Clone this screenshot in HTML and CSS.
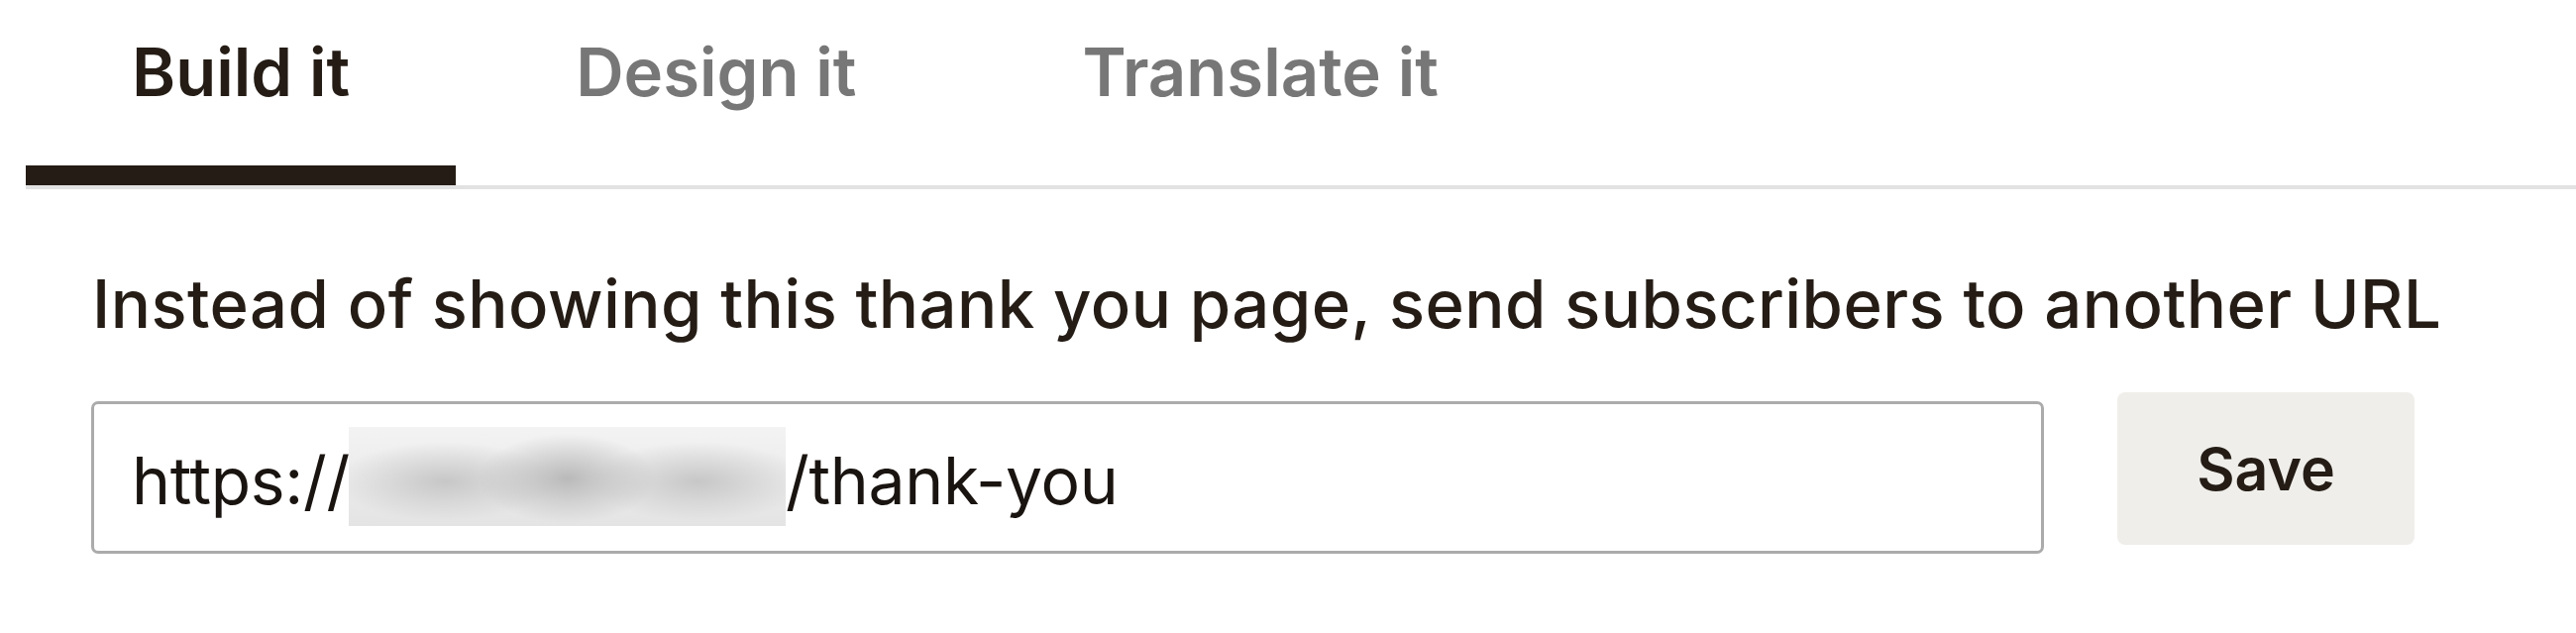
FILE: index.html
```html
<!DOCTYPE html>
<html lang="en">
<head>
<meta charset="utf-8">
<title>Thank you page settings</title>
<link rel="stylesheet" href="styles.css">
</head>
<body>
<div class="page">
  <nav class="tabs">
    <div class="tab active">Build it</div>
    <div class="tab">Design it</div>
    <div class="tab">Translate it</div>
  </nav>
  <section class="panel">
    <h2 class="heading">Instead of showing this thank you page, send subscribers to another URL</h2>
    <div class="row">
      <div class="field">
        <span class="url">https://</span><span class="redacted"></span><span class="url">/thank-you</span>
      </div>
      <button class="save" type="button">Save</button>
    </div>
  </section>
</div>
</body>
</html>
```
FILE: styles.css
```css
html, body {
  margin: 0;
  padding: 0;
  background: #ffffff;
}
body {
  font-family: Inter, "Liberation Sans", sans-serif;
  color: #241c15;
}
.page {
  padding-left: 26px;
}
.tabs {
  display: flex;
  gap: 14px;
  border-bottom: 4px solid #e2e2e2;
}
.tab {
  padding: 39px 107px 61px;
  font-size: 67px;
  line-height: 1;
  font-weight: 600;
  color: #777777;
  border-bottom: 20px solid transparent;
  white-space: nowrap;
}
.tab.active {
  color: #241c15;
  border-bottom-color: #241c15;
}
.panel {
  padding-left: 66px;
}
.heading {
  margin: 82px 0 0 1px;
  font-size: 67px;
  line-height: 1;
  font-weight: 500;
  letter-spacing: 0.45px;
  white-space: nowrap;
}
.row {
  display: flex;
  align-items: flex-start;
  gap: 74px;
  margin-top: 56px;
}
.field {
  box-sizing: border-box;
  width: 1971px;
  height: 154px;
  margin-top: 9px;
  border: 3px solid #ababab;
  border-radius: 7px;
  padding: 0 0 0 38px;
  display: flex;
  align-items: center;
}
.url {
  font-size: 66px;
  line-height: 1;
  font-weight: 400;
  letter-spacing: -0.3px;
  color: #1a1410;
  white-space: nowrap;
  margin-top: 6px;
}
.redacted {
  display: block;
  width: 441px;
  height: 100px;
  margin-left: -1px;
  margin-top: -2px;
  background:
    radial-gradient(ellipse 90px 45px at 50% 52%, rgba(180,180,180,0.9), rgba(180,180,180,0) 100%),
    radial-gradient(ellipse 110px 40px at 22% 55%, rgba(190,190,190,0.8), rgba(190,190,190,0) 100%),
    radial-gradient(ellipse 110px 40px at 80% 55%, rgba(190,190,190,0.8), rgba(190,190,190,0) 100%),
    linear-gradient(#f3f3f3, #e4e4e4);
}
.save {
  box-sizing: border-box;
  width: 300px;
  height: 154px;
  border: none;
  border-radius: 8px;
  background: #efeeea;
  font-family: Inter, "Liberation Sans", sans-serif;
  font-size: 59px;
  font-weight: 600;
  color: #241c15;
  padding: 0;
  cursor: pointer;
}
```
